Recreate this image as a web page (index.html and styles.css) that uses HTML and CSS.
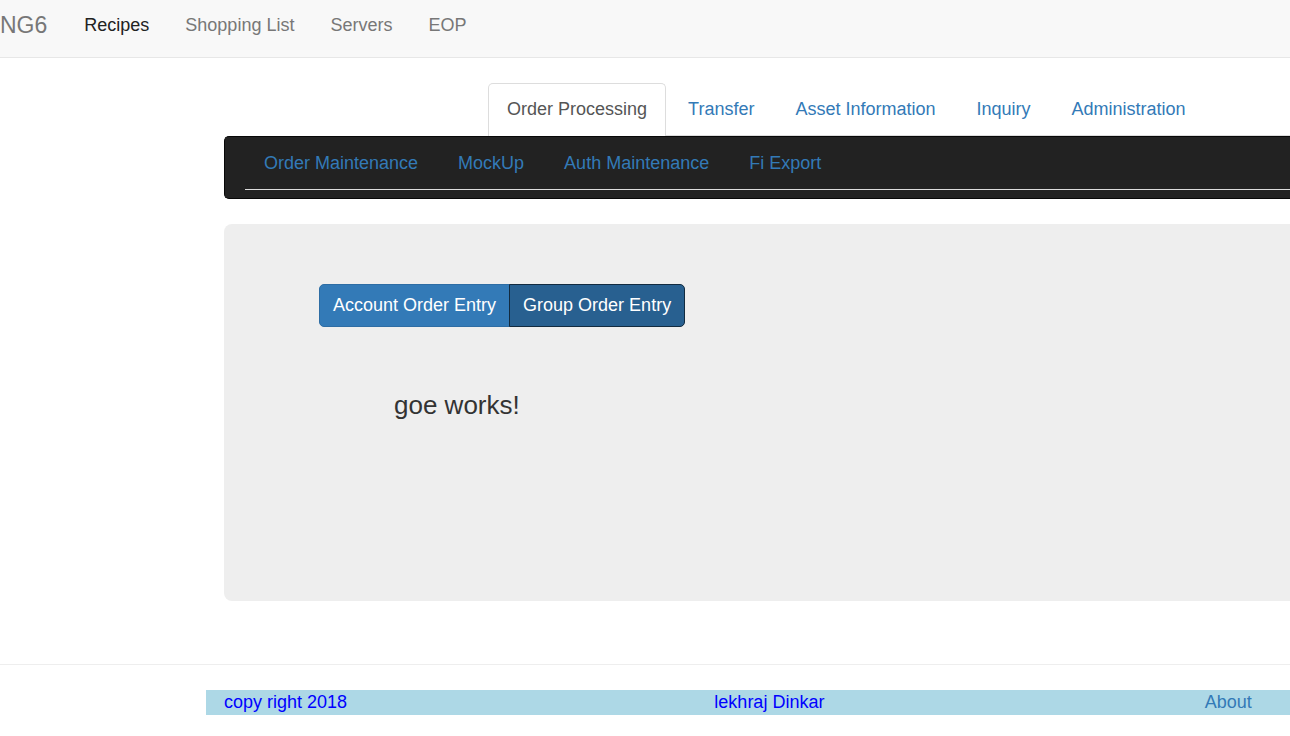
FILE: index.html
```html
<!DOCTYPE html>
<html lang="en">
<head>
<meta charset="utf-8">
<meta name="viewport" content="width=device-width, initial-scale=1">
<title>NG6</title>
<link rel="stylesheet" href="styles.css">
</head>
<body>
<header class="navbar">
  <a class="brand" href="#">NG6</a>
  <nav class="nav" aria-label="Main">
    <a class="nav-link active" href="#">Recipes</a>
    <a class="nav-link" href="#">Shopping List</a>
    <a class="nav-link" href="#">Servers</a>
    <a class="nav-link" href="#">EOP</a>
  </nav>
</header>
<main class="container">
  <nav class="tabs" aria-label="Sections">
    <a class="tab active" href="#">Order Processing</a>
    <a class="tab" href="#">Transfer</a>
    <a class="tab" href="#">Asset Information</a>
    <a class="tab" href="#">Inquiry</a>
    <a class="tab" href="#">Administration</a>
  </nav>
  <div class="subnav">
    <nav class="subnav-list" aria-label="Order processing">
      <a class="subnav-link" href="#">Order Maintenance</a>
      <a class="subnav-link" href="#">MockUp</a>
      <a class="subnav-link" href="#">Auth Maintenance</a>
      <a class="subnav-link" href="#">Fi Export</a>
    </nav>
  </div>
  <section class="jumbotron">
    <div class="btn-group">
      <button class="btn" type="button">Account Order Entry</button>
      <button class="btn active" type="button">Group Order Entry</button>
    </div>
    <p class="message">goe works!</p>
  </section>
</main>
<hr class="divider">
<footer class="footer">
  <span>copy right 2018</span>
  <span>lekhraj Dinkar</span>
  <a class="footer-link" href="#">About</a>
</footer>
</body>
</html>
```

FILE: styles.css
```css
* {
  box-sizing: border-box;
}

body {
  margin: 0;
  background: #fff;
  color: #333;
  font: 18px/25px "Liberation Sans", Arial, sans-serif;
}

a {
  color: #337ab7;
  text-decoration: none;
}

.navbar {
  display: flex;
  padding: 13px 0 19px;
  border-bottom: 1px solid #e7e7e7;
  background: #f8f8f8;
}

.brand {
  margin-right: 19px;
  color: #777;
  font-size: 23px;
}

.nav {
  display: flex;
}

.nav-link {
  padding: 0 18px;
  color: #777;
}

.nav-link.active {
  color: #222;
}

.container {
  padding: 25px 0 0 224px;
}

.tabs {
  display: flex;
  gap: 3px;
  margin-left: 264px;
  border-bottom: 1px solid #ddd;
}

.tab {
  margin-bottom: -1px;
  padding: 13px 18px 14px;
  border: 1px solid transparent;
  border-bottom: 0;
  border-radius: 5px 5px 0 0;
}

.tab.active {
  border-color: #ddd;
  background: #fff;
  color: #555;
}

.subnav {
  padding: 0 0 8px 20px;
  border: 1px solid #080808;
  border-right: 0;
  border-radius: 5px 0 0 5px;
  background: #222;
}

.subnav-list {
  display: flex;
  gap: 2px;
  border-bottom: 1px solid #ddd;
}

.subnav-link {
  padding: 14px 19px 13px;
}

.jumbotron {
  min-height: 377px;
  margin-top: 25px;
  padding: 60px 0 60px 95px;
  border-radius: 8px 0 0 8px;
  background: #eee;
}

.btn-group {
  display: flex;
}

.btn {
  padding: 8px 13px;
  border: 1px solid #2e6da4;
  border-radius: 5px 0 0 5px;
  background: #337ab7;
  color: #fff;
  font: inherit;
}

.btn + .btn {
  margin-left: -1px;
  border-radius: 0 5px 5px 0;
}

.btn.active {
  border-color: #122b40;
  background: #286090;
}

.message {
  margin: 60px 0 0 75px;
  font-size: 26px;
  line-height: 36px;
}

.divider {
  height: 1px;
  margin: 63px 0 25px;
  border: 0;
  background: #eee;
}

.footer {
  display: grid;
  grid-template-columns: 46% 46% 8%;
  margin-left: 206px;
  padding-left: 18px;
  background: lightblue;
  color: blue;
}
```
